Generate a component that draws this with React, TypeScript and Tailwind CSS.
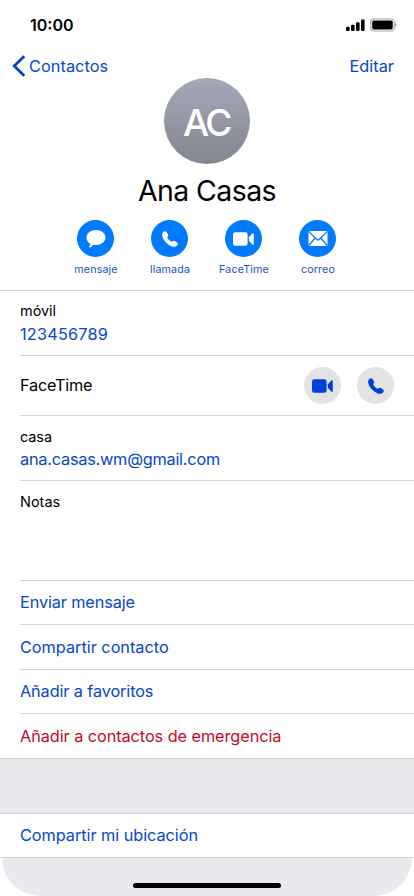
import type { ReactNode } from "react";

const font = "font-['Inter','Liberation_Sans',sans-serif]";

function Phone({ className }: { className: string }) {
  return (
    <svg viewBox="0 0 16 16" className={className} fill="currentColor">
      <path d="M1.200 1.100C2.300 0 3.700-.1 4.500 1l1.300 2c.6 1 .5 1.800-.2 2.500-.6.600-.5 1.100.1 1.900.8 1.100 1.700 2 2.800 2.800.9.600 1.400.700 2 .1.700-.7 1.600-.8 2.500-.2l2 1.300c1.100.8 1.200 2.100.1 3.200-1.400 1.400-3.500 1.700-6.300.3C5.400 13.200 2.700 10.500 1.100 7.400-.3 4.600-.2 2.500 1.200 1.100z" />
    </svg>
  );
}

function Video({ className }: { className: string }) {
  return (
    <svg viewBox="0 0 21 14" className={className} fill="currentColor">
      <rect x="0" y="0.200" width="14.600" height="13.600" rx="2.300" />
      <path d="M15.900 5.200 19.300 1.600c.8-.7 1.500-.5 1.500.5v9.800c0 1-.7 1.200-1.500.5l-3.400-3.600z" />
    </svg>
  );
}

function Bubble() {
  return (
    <svg viewBox="0 0 20 18" className="h-[18px] w-5" fill="currentColor">
      <path d="M10 0c5.300 0 9.500 3.200 9.500 7.500S15.300 15 10 15c-.9 0-1.700-.1-2.500-.3C6.300 16.300 4.700 17.300 3.300 17.400c-.5 0-.6-.4-.3-.7.7-.7 1.200-1.700 1.200-2.900C1.900 12.500.5 10.200.5 7.500.500 3.200 4.700 0 10 0z" />
    </svg>
  );
}

function Mail() {
  return (
    <svg viewBox="0 0 20 15" className="h-[15px] w-5">
      <rect x="0.500" y="0" width="19" height="15" rx="1.200" fill="white" />
      <path d="M.8.6 9 8.500c.6.6 1.400.6 2 0L19.200.6M.8 14.500 7.200 7M19.200 14.500 12.800 7" fill="none" stroke="#007aff" strokeWidth="1.200" />
    </svg>
  );
}

function Action({ label, children }: { label: string; children: ReactNode }) {
  return (
    <button className="flex w-[74px] flex-col items-center">
      <span className="mr-px flex size-[37px] items-center justify-center rounded-full bg-[#007aff] text-white">{children}</span>
      <span className="mt-[6px] whitespace-nowrap text-[10.7px] leading-[14px] tracking-[0.15px] text-[#1b4fc4]">{label}</span>
    </button>
  );
}

function Row({ children, className }: { children: ReactNode; className: string }) {
  return <div className={`ml-5 shrink-0 border-b border-[#d5d5d8] ${className}`}>{children}</div>;
}

function Link({ children, className }: { children: string; className: string }) {
  return <span className={`block whitespace-nowrap text-[16.3px] leading-[22px] ${className}`}>{children}</span>;
}

export default function App() {
  return (
    <div className={`flex h-[896px] w-[414px] flex-col overflow-hidden bg-white text-black ${font}`}>
      <header className="flex h-[291px] shrink-0 flex-col border-b border-[#d5d5d8]">
        <div className="flex h-[50px] items-center justify-between pl-[30px] pr-[17px]">
          <span className="text-[16px] font-semibold leading-5">10:00</span>
          <svg viewBox="0 0 52 14" className="h-[14px] w-[52px]">
            <rect x="1" y="8.700" width="3.600" height="4.300" rx="1" />
            <rect x="6" y="6.700" width="3.600" height="6.300" rx="1" />
            <rect x="11" y="4.300" width="3.600" height="8.700" rx="1" />
            <rect x="16" y="1.500" width="3.600" height="11.500" rx="1" />
            <rect x="25.700" y="1" width="23.500" height="12" rx="3.400" fill="white" stroke="#aaa" strokeWidth="1.200" />
            <rect x="27.200" y="2.500" width="20.500" height="9" rx="1.800" />
            <path d="M50.200 5.200c1.600.5 1.600 3.100 0 3.600z" fill="#888" />
          </svg>
        </div>
        <nav className="flex h-8 shrink-0 items-center justify-between pl-3 pr-5 text-[#0645cf]">
          <span className="flex items-center">
            <svg viewBox="0 0 13 22" className="mr-[4px] h-[22px] w-[13px]" fill="none" stroke="currentColor" strokeWidth="2.800">
              <path d="M12.200 1.200 2.200 11l10 9.800" />
            </svg>
            <Link className="tracking-[0.050px]">Contactos</Link>
          </span>
          <Link className="tracking-[0.020px]">Editar</Link>
        </nav>
        <div className="-mt-1 flex size-[86px] shrink-0 items-center justify-center self-center rounded-full bg-linear-to-b from-[#a5a8b7] to-[#838690] text-[37px] font-medium leading-none tracking-[-2.500px] text-white">
          <span className="mr-px mt-[2px]">AC</span>
        </div>
        <h1 className="mt-[8px] text-center text-[28.5px] leading-[38px] tracking-[-0.600px]">Ana Casas</h1>
        <div className="mt-[10px] flex justify-center">
          <Action label="mensaje"><Bubble /></Action>
          <Action label="llamada"><Phone className="size-4" /></Action>
          <Action label="FaceTime"><Video className="h-[14px] w-[21px]" /></Action>
          <Action label="correo"><Mail /></Action>
        </div>
      </header>
      <Row className="h-[65px] pt-[10px]">
        <div className="text-[14.5px] leading-5 tracking-[-0.050px]">móvil</div>
        <Link className="mt-[2px] tracking-[0.200px] text-[#0645cf]">123456789</Link>
      </Row>
      <Row className="flex h-[60px] items-center justify-between pr-5">
        <Link className="pb-px tracking-[-0.220px]">FaceTime</Link>
        <span className="flex gap-4 text-[#0040dd]">
          <span className="flex size-[37px] items-center justify-center rounded-full bg-[#e3e3e6]"><Video className="h-[14px] w-[21px]" /></span>
          <span className="flex size-[37px] items-center justify-center rounded-full bg-[#e3e3e6]"><Phone className="size-4" /></span>
        </span>
      </Row>
      <Row className="h-[65px] pt-[11px]">
        <div className="text-[14.5px] leading-5 tracking-[-0.100px]">casa</div>
        <Link className="mt-px tracking-[-0.220px] text-[#0645cf]">ana.casas.wm@gmail.com</Link>
      </Row>
      <Row className="h-[100px] pt-[11px]">
        <div className="text-[14.5px] leading-5">Notas</div>
      </Row>
      <Row className="flex h-11 items-center pb-px"><Link className="tracking-[-0.130px] text-[#0645cf]">Enviar mensaje</Link></Row>
      <Row className="flex h-[45px] items-center"><Link className="tracking-[-0.020px] text-[#0645cf]">Compartir contacto</Link></Row>
      <Row className="flex h-11 items-center pb-px"><Link className="tracking-[-0.120px] text-[#0645cf]">Añadir a favoritos</Link></Row>
      <div className="flex h-[45px] shrink-0 items-center border-b border-[#ceced2] pl-5">
        <Link className="tracking-[-0.070px] text-[#c4082a]">Añadir a contactos de emergencia</Link>
      </div>
      <div className="h-[55px] shrink-0 border-b border-[#ceced2] bg-[#eae9ee]" />
      <div className="flex h-11 shrink-0 items-center border-b border-[#d5d5d8] pb-px pl-5">
        <Link className="tracking-[-0.050px] text-[#0645cf]">Compartir mi ubicación</Link>
      </div>
      <footer className="mx-[2px] flex h-[38px] shrink-0 justify-center rounded-b-[39px] bg-[#eae9ee] pt-[25px]">
        <div className="h-[5px] w-[148px] rounded-full bg-black" />
      </footer>
    </div>
  );
}
